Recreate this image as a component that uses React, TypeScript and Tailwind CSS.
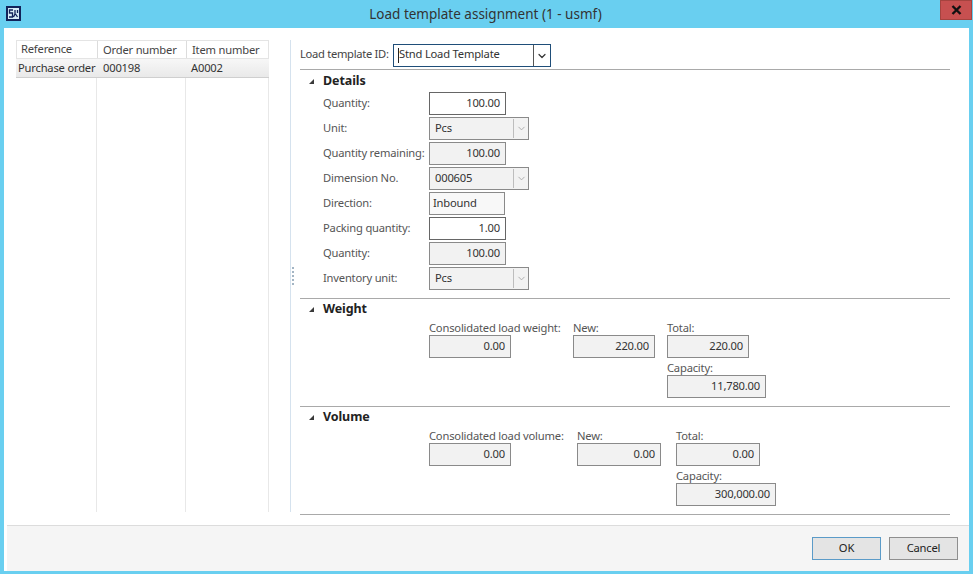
import { ChevronDown } from 'lucide-react';

const detailRows = [
    { label: 'Quantity:', value: '100.00', kind: 'input', width: 'w-[77px]' },
    { label: 'Unit:', value: 'Pcs', kind: 'combo' },
    { label: 'Quantity remaining:', value: '100.00', kind: 'readonly', width: 'w-[77px]' },
    { label: 'Dimension No.', value: '000605', kind: 'combo' },
    { label: 'Direction:', value: 'Inbound', kind: 'text', width: 'w-[76px]' },
    { label: 'Packing quantity:', value: '1.00', kind: 'input', width: 'w-[77px]' },
    { label: 'Quantity:', value: '100.00', kind: 'readonly', width: 'w-[77px]' },
    { label: 'Inventory unit:', value: 'Pcs', kind: 'combo' },
];

function Triangle() {
    return (
        <svg width="7" height="7" viewBox="0 0 7 7" className="shrink-0">
            <path d="M6 1V6H1Z" fill="#3a3a3a" />
        </svg>
    );
}

function SectionTitle({ title }: { title: string }) {
    return (
        <div className="flex h-4 items-center gap-[8px] pl-[8px]">
            <Triangle />
            <span className="text-[12.5px] font-bold leading-4 tracking-[-0.1px] text-[#222]">{title}</span>
        </div>
    );
}

function ReadField({ value, className }: { value: string; className: string }) {
    return (
        <div className={`flex h-[23px] items-center justify-end border border-[#8a8a8a] bg-[#f2f2f2] pr-[5px] text-[#333] ${className}`}>
            {value}
        </div>
    );
}

function Combo({ value }: { value: string }) {
    return (
        <div className="flex h-[23px] w-[100px] items-center border border-[#8a8a8a] bg-[#f2f2f2] text-[#333]">
            <span className="flex-1 pl-[5px]">{value}</span>
            <span className="flex h-full w-[16px] items-center justify-center">
                <span className="h-[19px] border-l border-[#bdbdbd]" />
                <ChevronDown size={11} strokeWidth={2} className="ml-[2px] text-[#a8a8a8]" />
            </span>
        </div>
    );
}

function DetailRow({ label, value, kind, width }: { label: string; value: string; kind: string; width?: string }) {
    return (
        <div className="flex h-[23px] items-center">
            <span className="w-[106px] shrink-0 whitespace-nowrap text-[#555]">{label}</span>
            {kind === 'combo' && <Combo value={value} />}
            {kind === 'input' && (
                <div className={`flex h-[23px] items-center justify-end border border-[#666] bg-white pr-[5px] text-[#333] ${width}`}>{value}</div>
            )}
            {kind === 'readonly' && <ReadField value={value} className={width ?? ''} />}
            {kind === 'text' && (
                <div className={`flex h-[23px] items-center border border-[#8a8a8a] bg-[#f8f8f8] pl-[3px] text-[#333] ${width}`}>{value}</div>
            )}
        </div>
    );
}

function Measure({ label, value, width }: { label: string; value: string; width: string }) {
    return (
        <div className="flex flex-col">
            <span className="h-[14px] leading-[14px] whitespace-nowrap text-[#555]">{label}</span>
            <ReadField value={value} className={width} />
        </div>
    );
}

function Rule() {
    return <div className="h-px bg-[#a9a9a9]" />;
}

export default function App() {
    return (
        <div className="flex h-[574px] w-[973px] flex-col overflow-hidden bg-[#69cff0] px-[4px] pb-[3px] font-['Noto_Sans',sans-serif] text-[11.2px] tracking-[-0.2px]">
            {/* title bar */}
            <div className="-mx-[4px] flex h-[28px] shrink-0 items-start">
                <div className="mt-[6px] ml-[6px] w-[15px]">
                    <svg width="15" height="15" viewBox="0 0 15 15">
                        <rect width="15" height="15" fill="#12235a" />
                        <rect x="2" y="2" width="11" height="11" fill="#d8ecf7" />
                        <path d="M7 4H3.5V7H6.5V11H3M9 4V8L7.5 11M9.5 8L11.5 11M11.5 4V7" fill="none" stroke="#12235a" strokeWidth="1.3" />
                    </svg>
                </div>
                <div className="flex-1 pt-[6px] pl-[10px] text-center text-[13.5px] leading-[17px] tracking-normal text-[#333]">
                    Load template assignment (1 - usmf)
                </div>
                <div className="mr-px flex h-[20px] w-[32px] items-center justify-center border border-[#a5433f] bg-[#c75050]">
                    <svg width="11" height="10" viewBox="0 0 11 10">
                        <path d="M1.5 1L9.5 9M9.5 1L1.5 9" stroke="#111" strokeWidth="2.4" />
                    </svg>
                </div>
            </div>

            {/* dialog body */}
            <div className="flex min-h-0 flex-1 flex-col bg-white">
                <div className="flex h-[497px] shrink-0 pt-[12px] pl-[12px]">
                    {/* grid */}
                    <div className="flex h-[472px] w-[253px] shrink-0 flex-col">
                        <div className="flex h-[19px] shrink-0 items-center border border-[#e4e4e4] pb-px text-[#444]">
                            <span className="w-[80px] pl-[4px]">Reference</span>
                            <span className="w-[89px] border-l border-[#dcdcdc] pl-[5px] leading-[17px]">Order number</span>
                            <span className="border-l border-[#dcdcdc] pl-[5px] leading-[17px]">Item number</span>
                        </div>
                        <div className="flex h-[19px] shrink-0 items-center border-b border-[#cfcfcf] bg-gradient-to-b from-[#f7f7f7] to-[#e9e9e9] text-[#333]">
                            <span className="w-[81px] pl-[2px] whitespace-nowrap">Purchase order</span>
                            <span className="w-[89px] pl-[6px]">000198</span>
                            <span className="pl-[5px]">A0002</span>
                        </div>
                        <div className="flex flex-1">
                            <div className="w-[81px] border-r border-[#e8e8e8]" />
                            <div className="w-[89px] border-r border-[#e8e8e8]" />
                            <div className="w-[83px] border-r border-[#e8e8e8]" />
                        </div>
                    </div>

                    {/* splitter */}
                    <div className="ml-[21px] flex h-[472px] w-[10px] shrink-0 items-center border-l border-[#d5e2ee]">
                        <div className="ml-px flex flex-col gap-[2px]">
                            {[0, 1, 2, 3, 4].map(i => (
                                <span key={i} className="h-[2px] w-[2px] bg-[#a3b5c4]" />
                            ))}
                        </div>
                    </div>

                    {/* form */}
                    <div className="flex h-[473px] w-[650px] shrink-0 flex-col">
                        <div className="mt-[4px] flex h-[23px] items-center">
                            <span className="w-[93px] pb-[2px] tracking-[-0.3px] text-[#444]">Load template ID:</span>
                            <div className="flex h-[23px] w-[158px] items-center border border-[#1f4e79] bg-white text-[#333]">
                                <span className="ml-[4px] h-[15px] w-px shrink-0 bg-[#222]" />
                                <span className="flex-1 pb-[2px]">Stnd Load Template</span>
                                <span className="flex h-full w-[17px] items-center justify-center border-l border-[#555]">
                                    <ChevronDown size={12} strokeWidth={2.4} className="text-[#333]" />
                                </span>
                            </div>
                        </div>
                        <div className="mt-[2px]"><Rule /></div>

                        <div className="mt-[3px]"><SectionTitle title="Details" /></div>
                        <div className="mt-[3px] flex flex-col gap-[2px] pl-[23px]">
                            {detailRows.map((row, i) => (
                                <DetailRow key={i} {...row} />
                            ))}
                        </div>
                        <div className="mt-[8px]"><Rule /></div>

                        <div className="mt-[2px]"><SectionTitle title="Weight" /></div>
                        <div className="mt-[4px] flex pl-[129px]">
                            <div className="w-[144px]"><Measure label="Consolidated load weight:" value="0.00" width="w-[82px]" /></div>
                            <div className="w-[94px]"><Measure label="New:" value="220.00" width="w-[82px]" /></div>
                            <div className="flex flex-col gap-[3px]">
                                <Measure label="Total:" value="220.00" width="w-[82px]" />
                                <Measure label="Capacity:" value="11,780.00" width="w-[99px]" />
                            </div>
                        </div>
                        <div className="mt-[8px]"><Rule /></div>

                        <div className="mt-[2px]"><SectionTitle title="Volume" /></div>
                        <div className="mt-[4px] flex pl-[129px]">
                            <div className="w-[148px]"><Measure label="Consolidated load volume:" value="0.00" width="w-[82px]" /></div>
                            <div className="w-[99px]"><Measure label="New:" value="0.00" width="w-[84px]" /></div>
                            <div className="flex flex-col gap-[3px]">
                                <Measure label="Total:" value="0.00" width="w-[84px]" />
                                <Measure label="Capacity:" value="300,000.00" width="w-[100px]" />
                            </div>
                        </div>
                        <div className="mt-[8px]"><Rule /></div>
                    </div>
                </div>

                {/* footer */}
                <div className="ml-[3px] flex flex-1 items-center justify-end gap-[8px] border-t border-[#dcdcdc] bg-[#f5f5f5] pr-[11px]">
                    <button className="h-[23px] w-[69px] border border-[#5b9bc8] bg-[#e4e4e4] pb-px text-[#222]">OK</button>
                    <button className="h-[23px] w-[69px] border border-[#8f8f8f] bg-[#e4e4e4] pb-px text-[#222]">Cancel</button>
                </div>
            </div>
        </div>
    );
}
